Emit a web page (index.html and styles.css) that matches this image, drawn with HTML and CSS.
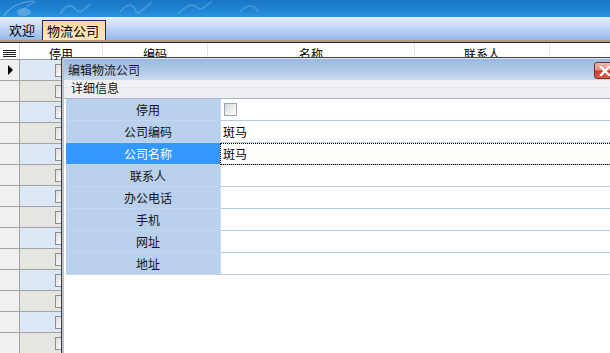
FILE: index.html
```html
<!DOCTYPE html>
<html lang="zh">
<head>
<meta charset="utf-8">
<title>物流公司</title>
<link rel="stylesheet" href="styles.css">
</head>
<body>
<div class="app">
  <div class="banner">
    <svg class="banner-art" width="610" height="17" viewBox="0 0 610 17">
      <path d="M4 16 C10 6 20 2 34 1" stroke="#8fc3ee" stroke-width="1.2" fill="none" opacity="0.6"/>
      <path d="M18 17 C22 10 28 4 36 2" stroke="#8fc3ee" stroke-width="1" fill="none" opacity="0.5"/>
      <ellipse cx="24" cy="12" rx="7" ry="4" fill="#8fc3ee" opacity="0.45"/>
      <path d="M60 14 C66 4 72 4 76 10 C80 15 86 8 90 4" stroke="#cfe6fa" stroke-width="2" fill="none" opacity="0.22"/>
      <path d="M120 12 C128 2 134 4 136 12 C138 16 146 6 152 2" stroke="#cfe6fa" stroke-width="2" fill="none" opacity="0.2"/>
      <path d="M178 14 C186 6 192 2 198 8 C202 12 206 4 212 2" stroke="#cfe6fa" stroke-width="2" fill="none" opacity="0.2"/>
      <path d="M240 12 C248 2 256 6 258 12" stroke="#cfe6fa" stroke-width="2" fill="none" opacity="0.18"/>
    </svg>
  </div>
  <div class="tabbar">
    <div class="tab">欢迎</div>
    <div class="tab tab-active">物流公司</div>
  </div>
  <div class="grid">
    <div class="grid-head">
      <div class="hcell c-rh"><span class="menu-icon"></span></div>
      <div class="hcell c-stop">停用</div>
      <div class="hcell c-code">编码</div>
      <div class="hcell c-name">名称</div>
      <div class="hcell c-contact">联系人</div>
      <div class="hcell c-rest"></div>
    </div>
    <div class="grid-body">
      <div class="row"><div class="rh"><span class="arrow"></span></div><div class="cell a"><span class="cb"></span></div></div>
      <div class="row"><div class="rh"></div><div class="cell b"><span class="cb"></span></div></div>
      <div class="row"><div class="rh"></div><div class="cell a"><span class="cb"></span></div></div>
      <div class="row"><div class="rh"></div><div class="cell b"><span class="cb"></span></div></div>
      <div class="row"><div class="rh"></div><div class="cell a"><span class="cb"></span></div></div>
      <div class="row"><div class="rh"></div><div class="cell b"><span class="cb"></span></div></div>
      <div class="row"><div class="rh"></div><div class="cell a"><span class="cb"></span></div></div>
      <div class="row"><div class="rh"></div><div class="cell b"><span class="cb"></span></div></div>
      <div class="row"><div class="rh"></div><div class="cell a"><span class="cb"></span></div></div>
      <div class="row"><div class="rh"></div><div class="cell b"><span class="cb"></span></div></div>
      <div class="row"><div class="rh"></div><div class="cell a"><span class="cb"></span></div></div>
      <div class="row"><div class="rh"></div><div class="cell b"><span class="cb"></span></div></div>
      <div class="row"><div class="rh"></div><div class="cell a"><span class="cb"></span></div></div>
      <div class="row"><div class="rh"></div><div class="cell b"><span class="cb"></span></div></div>
    </div>
  </div>

  <div class="dialog">
    <div class="dlg-title">
      <span class="dlg-caption">编辑物流公司</span>
      <span class="dlg-close">
        <svg width="12" height="10" viewBox="0 0 12 10"><path d="M2 1 L10 9 M10 1 L2 9" stroke="#ffffff" stroke-width="2.4" stroke-linecap="square"/></svg>
      </span>
    </div>
    <div class="dlg-body">
      <div class="section">详细信息</div>
      <div class="props">
        <div class="prow"><div class="plabel">停用</div><div class="pval"><span class="pcheck"></span></div></div>
        <div class="prow"><div class="plabel">公司编码</div><div class="pval">斑马</div></div>
        <div class="prow sel"><div class="plabel">公司名称</div><div class="pval">斑马</div></div>
        <div class="prow"><div class="plabel">联系人</div><div class="pval"></div></div>
        <div class="prow"><div class="plabel">办公电话</div><div class="pval"></div></div>
        <div class="prow"><div class="plabel">手机</div><div class="pval"></div></div>
        <div class="prow"><div class="plabel">网址</div><div class="pval"></div></div>
        <div class="prow"><div class="plabel">地址</div><div class="pval"></div></div>
      </div>
    </div>
  </div>
</div>
</body>
</html>
```
FILE: styles.css
```css
html, body {
  margin: 0;
  padding: 0;
  background: #ffffff;
  overflow: hidden;
}
body {
  font-family: "Noto Sans CJK SC", "Noto Sans", sans-serif;
  font-size: 12px;
  color: #000;
}
.app {
  position: relative;
  width: 610px;
  height: 353px;
  overflow: hidden;
}
.banner {
  height: 17px;
  background: linear-gradient(to bottom, #1a76c6 0%, #1f84d4 60%, #2a93e0 100%);
  overflow: hidden;
}
.banner-art { display: block; }

.tabbar {
  height: 23px;
  display: flex;
  align-items: flex-end;
  padding-left: 5px;
  gap: 3px;
  background: linear-gradient(to bottom, #e4eefc 0%, #c4d8f6 45%, #93b6ea 100%);
  border-bottom: 2px solid #b39c7c;
  box-shadow: 0 1px 0 #1e2856;
}
.tab {
  font-size: 13px;
  height: 20px;
  line-height: 19px;
  padding: 0 4px;
  color: #000;
}
.tab-active {
  background: linear-gradient(to bottom, #fdd9a0, #fde6bf);
  border: 1px solid #1d2c66;
  border-bottom: none;
  height: 19px;
  padding: 0 6px 0 4px;
}

.grid {
  margin-top: 1px;
}
.grid-head {
  display: flex;
  height: 16px;
  background: #ffffff;
  border-bottom: 1px solid #a0a0a0;
}
.hcell {
  font-size: 12px;
  line-height: 22px;
  text-align: center;
  border-right: 1px solid #e4e4e4;
  box-sizing: border-box;
  overflow: visible;
  height: 16px;
}
.c-rh { width: 20px; border-right: 1px solid #d8d8d8; display: flex; align-items: center; justify-content: center; }
.c-stop { width: 83px; }
.c-code { width: 105px; }
.c-name { width: 207px; }
.c-contact { width: 135px; }
.c-rest { flex: 1; border-right: none; }
.menu-icon {
  display: block;
  width: 13px;
  height: 7px;
  margin-top: 4px;
  background: repeating-linear-gradient(to bottom, #222 0 1px, transparent 1px 2px);
}

.grid-body { background: #ffffff; }
.row {
  display: flex;
  height: 21px;
  box-sizing: border-box;
  border-bottom: 1px solid #a3a3a3;
}
.rh {
  width: 20px;
  box-sizing: border-box;
  background: #f0f0f0;
  border-right: 1px solid #a3a3a3;
  display: flex;
  align-items: center;
  justify-content: center;
}
.arrow {
  width: 0;
  height: 0;
  border-top: 5px solid transparent;
  border-bottom: 5px solid transparent;
  border-left: 5px solid #000;
  margin-left: 2px;
}
.cell {
  width: 83px;
  box-sizing: border-box;
  border-right: 1px solid #c8c8c8;
  position: relative;
  display: flex;
  align-items: center;
  padding-left: 35px;
}
.cell.a { background: #dde8f6; }
.cell.b { background: #e7e5df; }
.cb {
  width: 11px;
  height: 11px;
  border: 1px solid #8c8c8c;
  background: linear-gradient(135deg, #e0e0e0, #ffffff);
}

.dialog {
  position: absolute;
  left: 61px;
  top: 57px;
  width: 580px;
  height: 320px;
  background: #ffffff;
  border: 1px solid #3f3f3f;
  box-shadow: inset 2px 0 0 #bfc3c8;
  box-sizing: border-box;
  padding-left: 2px;
}
.dlg-title {
  height: 21px;
  display: flex;
  align-items: center;
  background: linear-gradient(to bottom, #98b9df 0%, #b4cbe9 60%, #c8daf0 100%);
  position: relative;
  border-top: 1px solid #dfe8f4;
}
.dlg-caption {
  padding-left: 4px;
  color: #151515;
  font-size: 12px;
}
.dlg-close {
  position: absolute;
  left: 530px;
  top: 3px;
  width: 20px;
  height: 15px;
  border: 1px solid #7a2a28;
  border-radius: 3px;
  background: linear-gradient(to bottom, #f3b9b1 0%, #e48f84 45%, #c8412f 55%, #d8603f 100%);
  display: flex;
  align-items: center;
  justify-content: center;
}
.dlg-body {
  background: #ffffff;
}
.section {
  height: 18px;
  line-height: 15px;
  padding-left: 7px;
  background: linear-gradient(to bottom, #f2f2f4 0%, #f2f2f4 40%, #e4e6ea 42%, #eeeff3 44%, #eeeff3 100%);
  border-bottom: 1px solid #aab4c4;
  font-size: 12px;
  color: #111;
}
.props {
  margin-top: 0;
  margin-left: 2px;
}
.prow {
  display: flex;
  height: 22px;
}
.plabel {
  width: 154px;
  box-sizing: border-box;
  background: #b9d1ed;
  border-bottom: 1px solid #c4d7ef;
  text-align: center;
  padding-left: 10px;
  line-height: 21px;
  color: #111;
}
.pval {
  flex: 1;
  box-sizing: border-box;
  border-bottom: 1px solid #b9cbda;
  border-left: 1px solid #c9d9ea;
  padding-left: 2px;
  line-height: 21px;
  display: flex;
  align-items: center;
}
.prow.sel .plabel {
  background: #3399ff;
  color: #ffffff;
}
.prow.sel .pval {
  outline: 1px dotted #000;
  outline-offset: -1px;
  background: #fffdf9;
}
.pcheck {
  width: 11px;
  height: 11px;
  margin-left: 1px;
  border: 1px solid #9aa4ae;
  background: linear-gradient(135deg, #d4d8dc 0%, #f4f4f4 70%, #ffffff 100%);
}
```
